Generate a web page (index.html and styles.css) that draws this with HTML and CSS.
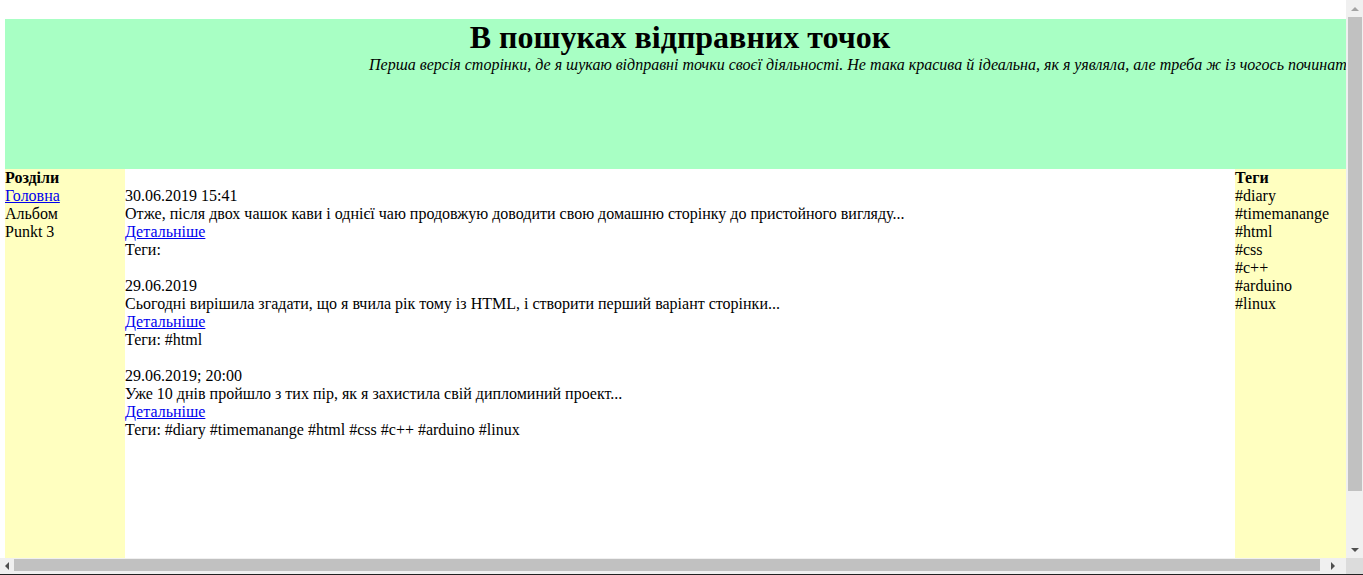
FILE: index.html
```html
<!DOCTYPE html>
<html lang="uk">
<head>
<meta charset="utf-8">
<title>В пошуках відправних точок</title>
<link rel="stylesheet" href="styles.css">
</head>
<body>
<div class="window">
  <div class="upper">
    <div class="viewport">
      <div class="page">
        <header class="header">
          <h1 class="title">В пошуках відправних точок</h1>
          <div class="subtitle">Перша версія сторінки, де я шукаю відправні точки своєї діяльності. Не така красива й ідеальна, як я уявляла, але треба ж із чогось починати...</div>
        </header>
        <div class="columns">
          <nav class="side">
            <div class="side-title">Розділи</div>
            <a href="#">Головна</a>
            <div>Альбом</div>
            <div>Punkt 3</div>
          </nav>
          <main class="main">
            <article class="post">
              <div>30.06.2019 15:41</div>
              <div>Отже, після двох чашок кави і однієї чаю продовжую доводити свою домашню сторінку до пристойного вигляду...</div>
              <a href="#">Детальніше</a>
              <div>Теги:</div>
            </article>
            <article class="post">
              <div>29.06.2019</div>
              <div>Сьогодні вирішила згадати, що я вчила рік тому із HTML, і створити перший варіант сторінки...</div>
              <a href="#">Детальніше</a>
              <div>Теги: #html</div>
            </article>
            <article class="post">
              <div>29.06.2019; 20:00</div>
              <div>Уже 10 днів пройшло з тих пір, як я захистила свій дипломиний проект...</div>
              <a href="#">Детальніше</a>
              <div>Теги: #diary #timemanange #html #css #c++ #arduino #linux</div>
            </article>
          </main>
          <aside class="side">
            <div class="side-title">Теги</div>
            <div>#diary</div>
            <div>#timemanange</div>
            <div>#html</div>
            <div>#css</div>
            <div>#c++</div>
            <div>#arduino</div>
            <div>#linux</div>
          </aside>
        </div>
      </div>
    </div>
    <div class="vscroll">
      <div class="vbtn"><span class="tri tri-up"></span></div>
      <div class="vthumb"></div>
      <div class="vspace"></div>
      <div class="vbtn"><span class="tri tri-down"></span></div>
    </div>
  </div>
  <div class="lower">
    <div class="hscroll">
      <div class="hbtn-left"><span class="tri tri-left"></span></div>
      <div class="hthumb"></div>
      <div class="hbtn-right"><span class="tri tri-right"></span></div>
    </div>
    <div class="corner"></div>
  </div>
</div>
</body>
</html>
```

FILE: styles.css
```css
html, body {
  margin: 0;
  padding: 0;
  overflow: hidden;
  background: #ffffff;
}

.window {
  width: 1363px;
  height: 574px;
  border-bottom: 1px solid #222222;
  display: flex;
  flex-direction: column;
  font-family: "Liberation Serif", "Times New Roman", serif;
  font-size: 16px;
  line-height: 18px;
  color: #000000;
}

.upper {
  display: flex;
  height: 558px;
}

.viewport {
  flex: 1;
  overflow: hidden;
  padding: 19px 0 0 5px;
  display: flex;
}

.page {
  width: 1350px;
  flex: none;
  display: flex;
  flex-direction: column;
}

.header {
  height: 150px;
  background: #a8ffc4;
  flex: none;
}

.title {
  margin: 0;
  font-size: 32px;
  line-height: 37px;
  font-weight: bold;
  text-align: center;
}

.subtitle {
  font-style: italic;
  white-space: nowrap;
  padding-left: 364px;
  line-height: 18px;
}

.columns {
  flex: 1;
  display: flex;
}

.side {
  width: 120px;
  flex: none;
  background: #ffffc0;
  display: flex;
  flex-direction: column;
  align-items: flex-start;
}

.side-title {
  font-weight: bold;
}

.main {
  flex: 1;
  padding-top: 18px;
  display: flex;
  flex-direction: column;
  gap: 18px;
}

.post {
  display: flex;
  flex-direction: column;
  align-items: flex-start;
}

a {
  color: #0000ee;
  text-decoration: underline;
}

/* scrollbars */
.vscroll {
  width: 17px;
  background: #f0f0f0;
  display: flex;
  flex-direction: column;
  align-items: stretch;
}

.vbtn {
  height: 17px;
  display: flex;
  align-items: center;
  justify-content: center;
}

.vthumb {
  height: 474px;
  margin: 0 1px 0 2px;
  background: #c1c1c1;
}

.vspace {
  flex: 1;
}

.lower {
  display: flex;
  height: 16px;
}

.hscroll {
  flex: 1;
  background: #f0f0f0;
  display: flex;
  align-items: stretch;
}

.hbtn-left {
  width: 14px;
  display: flex;
  align-items: center;
  justify-content: center;
}

.hthumb {
  width: 1306px;
  margin: 1px 0 3px 0;
  background: #c1c1c1;
}

.hbtn-right {
  flex: 1;
  display: flex;
  align-items: center;
  justify-content: center;
}

.corner {
  width: 17px;
  background: #dcdcdc;
}

.tri {
  width: 0;
  height: 0;
  display: block;
}

.tri-up {
  border-left: 4px solid transparent;
  border-right: 4px solid transparent;
  border-bottom: 4px solid #a3a3a3;
}

.tri-down {
  border-left: 4px solid transparent;
  border-right: 4px solid transparent;
  border-top: 4px solid #505050;
}

.tri-left {
  border-top: 4px solid transparent;
  border-bottom: 4px solid transparent;
  border-right: 4px solid #505050;
}

.tri-right {
  border-top: 4px solid transparent;
  border-bottom: 4px solid transparent;
  border-left: 4px solid #505050;
}
```
